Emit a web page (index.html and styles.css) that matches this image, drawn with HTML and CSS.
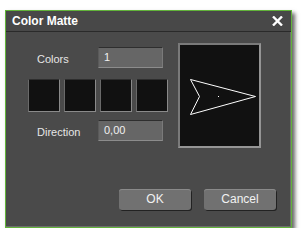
FILE: index.html
```html
<!DOCTYPE html>
<html>
<head>
<title>Color Matte</title>
<link rel="stylesheet" href="styles.css">
</head>
<body>
<div class="dialog">
    <div class="titlebar">
        <span class="title">Color Matte</span>
        <svg class="close" width="11" height="10" viewBox="0 0 11 10">
            <path d="M1 0.5 L10 9.5 M10 0.5 L1 9.5" stroke="#ffffff" stroke-width="2.4" fill="none"/>
        </svg>
    </div>
    <div class="main">
        <div class="fields">
            <div class="row">
                <span class="label">Colors</span>
                <div class="field">1</div>
            </div>
            <div class="swatches">
                <div class="swatch"></div>
                <div class="swatch"></div>
                <div class="swatch"></div>
                <div class="swatch"></div>
            </div>
            <div class="row direction">
                <span class="label">Direction</span>
                <div class="field">0,00</div>
            </div>
        </div>
        <div class="preview">
            <svg width="79" height="101" viewBox="0 0 79 101">
                <polygon points="10.5,34.5 75.5,51.5 10.5,69.5 19.5,51.5" stroke="#ffffff" stroke-width="1" fill="none"/>
                <rect x="38" y="51" width="1" height="1" fill="#ffffff"/>
            </svg>
        </div>
    </div>
    <div class="buttons">
        <div class="button">OK</div>
        <div class="button">Cancel</div>
    </div>
</div>
</body>
</html>
```

FILE: styles.css
```css
body {
    margin: 0;
    background: #ffffff;
    font-family: "Liberation Sans", Arial, sans-serif;
}

.dialog {
    width: 285px;
    height: 216px;
    margin: 10px 0 0 5px;
    border: 1px solid #62b33a;
    background: #4a4a4a;
    box-shadow: 3px 3px 4px rgba(0, 0, 0, 0.6), inset -1px -1px 0 #6e6e6e;
    display: flex;
    flex-direction: column;
    box-sizing: content-box;
}

.titlebar {
    height: 20px;
    border-bottom: 1px solid #2a2a2a;
    display: flex;
    align-items: center;
    justify-content: space-between;
    padding: 0 8px 0 6px;
    background: #484848;
}

.title {
    color: #ffffff;
    font-weight: bold;
    font-size: 12px;
}

.close {
    display: block;
}

.main {
    display: flex;
    padding: 11px 0 0 22px;
}

.fields {
    width: 140px;
    margin-right: 10px;
}

.row {
    display: flex;
    align-items: center;
    margin-top: 4px;
    height: 21px;
}

.row.direction {
    margin-top: 8px;
}

.label {
    width: 61px;
    padding: 3px 0 0 9px;
    color: #e6e6e6;
    font-size: 11px;
}

.field {
    width: 58px;
    height: 19px;
    line-height: 18px;
    padding-left: 5px;
    background: #666666;
    border-top: 1px solid #2e2e2e;
    border-left: 1px solid #5a5a5a;
    border-right: 1px solid #7a7a7a;
    border-bottom: 1px solid #8c8c8c;
    color: #f0f0f0;
    font-size: 11px;
    box-sizing: content-box;
}

.swatches {
    display: flex;
    gap: 4px;
    margin-top: 11px;
}

.swatch {
    width: 30px;
    height: 31px;
    background: #111111;
    border-top: 1px solid #2e2e2e;
    border-left: 1px solid #6a6a6a;
    border-right: 1px solid #8a8a8a;
    border-bottom: 1px solid #8a8a8a;
}

.preview {
    width: 79px;
    height: 101px;
    background: #111111;
    border: 2px solid #7a7a7a;
    border-right-color: #959595;
    border-bottom-color: #959595;
}

.preview svg {
    display: block;
}

.buttons {
    display: flex;
    justify-content: flex-end;
    gap: 13px;
    margin-top: 41px;
    padding-right: 15px;
}

.button {
    width: 72px;
    height: 21px;
    line-height: 21px;
    text-align: center;
    background: #717171;
    border-radius: 3px;
    box-shadow: 1px 1px 0 #222222, inset 0 1px 0 #8a8a8a;
    color: #f2f2f2;
    font-size: 12px;
}
```
